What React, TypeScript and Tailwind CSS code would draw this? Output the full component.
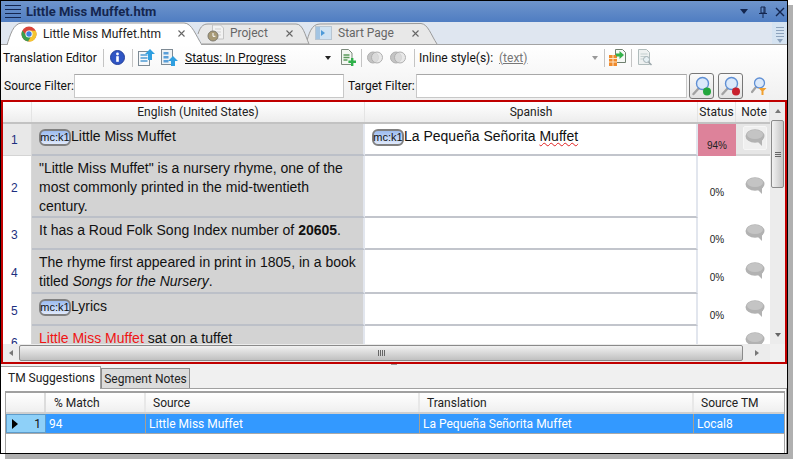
import React from 'react';

const uiFont = { fontFamily: 'Roboto, "Noto Sans", sans-serif' };

const ChromeIcon = () => (
  <svg width="16" height="16" viewBox="0 0 16 16">
    <circle cx="8" cy="8" r="7.5" fill="#d9453a" />
    <path d="M1.3 4.6 A7.5 7.5 0 0 0 7.2 15.5 L10.6 9.5 L5.4 9.5 Z" fill="#3a9f4d" />
    <path d="M8 4.5 L14.8 4.8 A7.5 7.5 0 0 1 7.2 15.5 L10.8 9 Z" fill="#f4c531" />
    <circle cx="8" cy="8" r="3.6" fill="#fff" />
    <circle cx="8" cy="8" r="2.7" fill="#3f7fe0" />
  </svg>
);

const ProjectIcon = () => (
  <svg width="18" height="18" viewBox="0 0 18 18">
    <path d="M5.5 1h8l3 3v11h-11z" fill="#f2f2f2" stroke="#c4c4c4" />
    <path d="M8 5h6M8 8h6M8 11h6" stroke="#cfcfcf" />
    <circle cx="6" cy="12" r="5" fill="#a89a76" stroke="#7e7a6e" />
    <path d="M6 9v3.3h2.4" stroke="#fff" fill="none" />
  </svg>
);

const StartIcon = () => (
  <svg width="17" height="14" viewBox="0 0 17 14">
    <rect x="0.5" y="0.5" width="16" height="13" fill="#cfe2f2" stroke="#b9c6d2" />
    <rect x="1" y="1" width="4" height="12" fill="#a3c4e2" />
    <path d="M6 4l4 3-4 3z" fill="#4d9ad8" />
  </svg>
);

const CloseX = () => (
  <svg width="7" height="7" viewBox="0 0 7 7" stroke="#666" strokeWidth="1.1">
    <path d="M0.5 0.5l6 6M6.5 0.5l-6 6" />
  </svg>
);

const InfoIcon = () => (
  <svg width="15" height="15" viewBox="0 0 15 15">
    <circle cx="7.5" cy="7.5" r="7" fill="#2f55c4" stroke="#24409a" />
    <circle cx="7.5" cy="4" r="1.4" fill="#fff" />
    <rect x="6.2" y="6.2" width="2.6" height="5.6" fill="#fff" />
  </svg>
);

const UploadDocIcon = () => (
  <svg width="17" height="17" viewBox="0 0 17 17">
    <rect x="0.5" y="2.5" width="11" height="14" fill="#f6f8fa" stroke="#7d8a94" />
    <path d="M2.5 6h7M2.5 9h7M2.5 12h7" stroke="#4f9bd4" strokeWidth="1.4" />
    <path d="M12 0l5 5h-3v6h-4V5H7z" fill="#2f9fe0" />
  </svg>
);

const UploadListIcon = () => (
  <svg width="17" height="17" viewBox="0 0 17 17">
    <rect x="0.5" y="0.5" width="11" height="15" fill="#eef2f4" stroke="#7d8a94" />
    <rect x="2.5" y="3" width="5" height="2.5" fill="#5a9fd8" />
    <rect x="2.5" y="7" width="5" height="2.5" fill="#5a9fd8" />
    <rect x="2.5" y="11" width="5" height="2.5" fill="#5a9fd8" />
    <path d="M12 7l5 5h-3v5h-4v-5H7z" fill="#2f9fe0" />
  </svg>
);

const AddDocIcon = () => (
  <svg width="16" height="17" viewBox="0 0 16 17">
    <path d="M1.5 0.5h7l3.5 3.5v11.5H1.5z" fill="#f4f7f2" stroke="#7c8a7c" />
    <path d="M3.5 6h6M3.5 8.5h6M3.5 11h4" stroke="#5a9a5a" strokeWidth="1.3" />
    <path d="M11 9h2.4v2.6H16V14h-2.6v3H11v-3H8.4v-2.4H11z" fill="#2fb14a" />
  </svg>
);

const CirclesIcon = () => (
  <svg width="16" height="13" viewBox="0 0 16 13">
    <circle cx="6" cy="6.5" r="5.5" fill="#c4c4c4" stroke="#b0b0b0" />
    <circle cx="10" cy="6.5" r="5.5" fill="#e2e2e2" fillOpacity="0.75" stroke="#b0b0b0" />
  </svg>
);

const ExportIcon = () => (
  <svg width="17" height="17" viewBox="0 0 17 17">
    <path d="M6.5 0.5h7l3 3v10h-10z" fill="#f5f8f5" stroke="#6f7f6f" />
    <rect x="0" y="6" width="8" height="11" fill="#ef8a2c" />
    <path d="M0 9.5h8M0 13h8M4 6v11" stroke="#fde3c4" />
    <path d="M7 4.5h3.5V2L15 6l-4.5 4V7.5H7z" fill="#35b24a" />
  </svg>
);

const PreviewIcon = () => (
  <svg width="15" height="17" viewBox="0 0 15 17">
    <path d="M0.5 0.5h8l3 3v12h-11z" fill="#eef1f1" stroke="#b0bcbc" />
    <path d="M2.5 5h7M2.5 7.5h7M2.5 10h5" stroke="#c3cfcf" />
    <circle cx="8.5" cy="10.5" r="3" fill="#e6f0f4" stroke="#a5b2b6" />
    <path d="M10.5 13l3 3" stroke="#9aa6aa" strokeWidth="1.5" />
  </svg>
);

const SearchDotIcon = ({ dot }: { dot: string }) => (
  <svg width="20" height="20" viewBox="0 0 20 20">
    <path d="M7 12l-5.5 6" stroke="#a2a2a2" strokeWidth="2.4" strokeLinecap="round" />
    <circle cx="10.5" cy="7.5" r="6" fill="#dbe9fa" stroke="#5f8fd4" strokeWidth="1.4" />
    <circle cx="15" cy="15.5" r="4" fill={dot} />
  </svg>
);

const SearchFilterIcon = () => (
  <svg width="17" height="18" viewBox="0 0 17 18">
    <path d="M5 10l-4 5" stroke="#a2a2a2" strokeWidth="2.2" strokeLinecap="round" />
    <circle cx="8.5" cy="6" r="5" fill="#dbe9fa" stroke="#5f8fd4" strokeWidth="1.3" />
    <path d="M7.5 11h8l-3 3v4h-2v-4z" fill="#f0a030" />
  </svg>
);

const NoteIcon = () => (
  <svg width="20" height="17" viewBox="0 0 20 17">
    <ellipse cx="10" cy="7" rx="9.5" ry="6.8" fill="#b2b2b2" />
    <ellipse cx="10" cy="5.5" rx="8" ry="4.5" fill="#c4c4c4" />
    <path d="M12 12l5 5v-7z" fill="#b2b2b2" />
  </svg>
);

const Caret = ({ cls }: { cls: string }) => (
  <span className={'w-0 h-0 border-x-[3.5px] border-x-transparent border-t-[4px] ' + cls} />
);

const Sep = () => <span className="block w-px h-[18px] bg-[#c4c4c4] shrink-0" />;

const McTag = () => (
  <span className="inline-flex items-center justify-center align-baseline w-[32px] h-[17px] rounded-[6px] border-2 border-[#808080] bg-gradient-to-b from-[#9dbcf0] to-[#dfe9fb] text-[11px] leading-none text-[#111]">
    mc:k1
  </span>
);

function TabShape({ d, fill }: { d: string; fill: string }) {
  return (
    <svg className="absolute inset-0" width="100%" height="100%">
      <path d={d} fill={fill} stroke="#9a9a9a" />
    </svg>
  );
}

function DocTabs() {
  return (
    <div className="relative h-[23px] bg-[#dfe6f0] border-b border-[#a3a3a3] flex shrink-0 whitespace-nowrap">
      <div className="relative w-[134px] h-[22px] ml-[303px] -mr-[437px] text-[#666] text-[12px]">
        <TabShape d="M2 22 C5 12 7 2 16 2 L117 1.5 C124 2 127 13 133 22" fill="#e8e8e8" />
        <div className="relative flex items-center h-full">
          <span className="ml-[11px]"><StartIcon /></span>
          <span className="ml-[6px] w-[74px]">Start Page</span>
          <CloseX />
        </div>
      </div>
      <div className="relative w-[114px] h-[22px] ml-[195px] -mr-[309px] text-[#666] text-[12px]">
        <TabShape d="M2 12 C4 6 6 2 12 2 L100 2 C107 2 109 13 113 22 L6 22" fill="#e8e8e8" />
        <div className="relative flex items-center h-full">
          <span className="ml-[11px]"><ProjectIcon /></span>
          <span className="ml-[5px] w-[56px]">Project</span>
          <CloseX />
        </div>
      </div>
      <div className="relative w-[197px] h-[23px] ml-[5px] text-[#222] text-[12px]">
        <TabShape d="M1 23 C4 14 7 1 16 1 L178 1 C186 1 190 14 196 23" fill="#ffffff" />
        <div className="relative flex items-center h-full">
          <span className="ml-[15px]"><ChromeIcon /></span>
          <span className="ml-[6px] w-[135px]">Little Miss Muffet.htm</span>
          <CloseX />
        </div>
      </div>
      <div className="ml-auto w-[15px] h-[22px] bg-[#d5e3f1] flex flex-col items-center gap-[2px] pt-[5px]">
        <span className="w-[8px] h-px bg-[#8da3bd]" />
        <span className="w-[8px] h-px bg-[#8da3bd]" />
        <span className="w-[8px] h-px bg-[#8da3bd]" />
        <span className="w-[8px] h-px bg-[#8da3bd]" />
        <Caret cls="border-t-[#8da3bd]" />
      </div>
    </div>
  );
}

function Toolbar() {
  return (
    <div className="h-[55px] shrink-0 bg-gradient-to-b from-white to-[#f0f0f0] text-[12px] text-[#111] whitespace-nowrap">
      <div className="h-[25px] flex items-center pl-[2px]">
        <span className="w-[100px]">Translation Editor</span>
        <Sep />
        <span className="ml-[6px]"><InfoIcon /></span>
        <span className="ml-[7px]"><Sep /></span>
        <span className="ml-[5px]"><UploadDocIcon /></span>
        <span className="ml-[6px]"><UploadListIcon /></span>
        <span className="ml-[7px] w-[140px] underline">Status: In Progress</span>
        <Caret cls="border-t-[#222]" />
        <span className="ml-[9px]"><AddDocIcon /></span>
        <span className="ml-[5px]"><Sep /></span>
        <span className="ml-[5px]"><CirclesIcon /></span>
        <span className="ml-[7px]"><CirclesIcon /></span>
        <span className="ml-[8px]"><Sep /></span>
        <span className="ml-[4px] w-[80px]">Inline style(s):</span>
        <span className="w-[93px] underline text-[#777]">(text)</span>
        <Caret cls="border-t-[#999]" />
        <span className="ml-[6px]"><Sep /></span>
        <span className="ml-[4px]"><ExportIcon /></span>
        <span className="ml-[5px]"><Sep /></span>
        <span className="ml-[6px]"><PreviewIcon /></span>
      </div>
      <div className="mt-[2px] h-[27px] flex items-center pl-[3px]">
        <span className="w-[70px]">Source Filter:</span>
        <span className="w-[270px] h-[24px] bg-white border border-[#c8c8c8] border-t-[#a8a8a8]" />
        <span className="ml-[4px] w-[68px]">Target Filter:</span>
        <span className="w-[271px] h-[24px] bg-white border border-[#c8c8c8] border-t-[#a8a8a8]" />
        <span className="ml-[2px] w-[25px] h-[26px] rounded-[3px] border border-[#777] bg-gradient-to-b from-[#fafafa] to-[#e2e2e2] flex items-center justify-center">
          <SearchDotIcon dot="#22a63c" />
        </span>
        <span className="ml-[4px] w-[25px] h-[26px] rounded-[3px] border border-[#777] bg-gradient-to-b from-[#fafafa] to-[#e2e2e2] flex items-center justify-center">
          <SearchDotIcon dot="#c8202c" />
        </span>
        <span className="ml-[8px]"><SearchFilterIcon /></span>
      </div>
    </div>
  );
}

function HeaderCell({ cls, children }: { cls: string; children?: React.ReactNode }) {
  return (
    <div className={'h-full flex items-center justify-center border-r border-[#e4e4e4] ' + cls}>{children}</div>
  );
}

interface SegmentRow {
  num: number;
  height: string;
  source: React.ReactNode;
  target?: React.ReactNode;
  status?: string;
}

const rows: SegmentRow[] = [
  {
    num: 1,
    height: 'h-[32px]',
    source: <><McTag />Little Miss Muffet</>,
    target: <><McTag />La Pequeña Señorita <span className="underline decoration-wavy decoration-[#e02020] decoration-1">Muffet</span></>,
    status: '94%',
  },
  {
    num: 2,
    height: 'h-[62px]',
    source: <>"Little Miss Muffet" is a nursery rhyme, one of the most commonly printed in the mid-twentieth century.</>,
    status: '0%',
  },
  {
    num: 3,
    height: 'h-[32px]',
    source: <>It has a Roud Folk Song Index number of <b>20605</b>.</>,
    status: '0%',
  },
  {
    num: 4,
    height: 'h-[44px]',
    source: <>The rhyme first appeared in print in 1805, in a book titled <i>Songs for the Nursery</i>.</>,
    status: '0%',
  },
  {
    num: 5,
    height: 'h-[32px]',
    source: <><McTag />Lyrics</>,
    status: '0%',
  },
  {
    num: 6,
    height: 'h-[32px]',
    source: <><span className="text-[#f01414]">Little Miss Muffet</span> sat on a tuffet</>,
  },
];

function SegmentGridRow({ row }: { row: SegmentRow }) {
  const first = row.num === 1;
  return (
    <div className={'flex shrink-0 ' + row.height}>
      <div className={'w-[29px] flex items-center pl-[8px] pt-[1px] text-[12px] text-[#1c2f80] border-r border-[#d8d8d8] ' + (first ? 'bg-[#e8e8e8] border-b border-b-[#d4d4d4]' : 'bg-white')}>
        {row.num}
      </div>
      <div className="w-[333px] bg-[#d3d3d3] pl-[7px] pr-[6px] pt-[3px] text-[14px] leading-[19px] text-[#111] border-r-2 border-r-[#e2e6ee] border-b-2 border-b-[#bcc0c8]">
        {row.source}
      </div>
      <div className="w-[333px] bg-white pl-[7px] pr-[6px] pt-[3px] text-[14px] leading-[19px] text-[#111] border-r-2 border-r-[#e2e6ee] border-b-2 border-b-[#c2c5cc]">
        {row.target}
      </div>
      <div className={'w-[38px] flex items-center justify-center pt-[11px] text-[10px] text-[#222] ' + (first ? 'bg-[#dd829a]' : 'bg-white')}>
        {row.status}
      </div>
      <div className={'w-[34px] flex items-center justify-center pb-[3px] pl-[3px] ' + (first ? 'bg-[#e6e6e6] border-b-2 border-b-[#d4d4d4]' : 'bg-white')}>
        {first ? (
          <span className="w-[24px] h-[24px] flex items-center justify-center bg-[#efefef] border border-[#f6f6f6] rounded-[2px]">
            <NoteIcon />
          </span>
        ) : (
          <NoteIcon />
        )}
      </div>
    </div>
  );
}

function VScroll() {
  return (
    <div className="w-[15px] bg-[#ececec] flex flex-col items-center shrink-0">
      <div className="h-[18px] flex items-center justify-center">
        <span className="w-0 h-0 border-x-[3px] border-x-transparent border-b-[4px] border-b-[#777]" />
      </div>
      <div className="w-[13px] h-[68px] rounded-[2px] border border-[#8a8a8a] bg-gradient-to-r from-[#f2f2f2] to-[#c4c4c4] flex flex-col items-center justify-center gap-px">
        <span className="w-[6px] h-px bg-[#666]" />
        <span className="w-[6px] h-px bg-[#666]" />
        <span className="w-[6px] h-px bg-[#666]" />
      </div>
      <div className="mt-auto h-[18px] flex items-center justify-center">
        <Caret cls="border-t-[#666]" />
      </div>
    </div>
  );
}

function HScroll() {
  return (
    <div className="h-[18px] flex items-center bg-[#ececec] shrink-0">
      <div className="w-[16px] flex justify-center">
        <span className="w-0 h-0 border-y-[3.5px] border-y-transparent border-r-[4px] border-r-[#777]" />
      </div>
      <div className="w-[724px] h-[16px] rounded-[2px] border border-[#8a8a8a] bg-gradient-to-b from-[#f2f2f2] to-[#c0c0c0] flex items-center justify-center gap-px">
        <span className="w-px h-[6px] bg-[#666]" />
        <span className="w-px h-[6px] bg-[#666]" />
        <span className="w-px h-[6px] bg-[#666]" />
        <span className="w-px h-[6px] bg-[#666]" />
      </div>
      <div className="w-[27px] flex justify-center">
        <span className="w-0 h-0 border-y-[3.5px] border-y-transparent border-l-[4px] border-l-[#777]" />
      </div>
      <div className="flex-1 h-full bg-[#f0f0f0]" />
    </div>
  );
}

function SegmentGrid() {
  return (
    <div className="h-[264px] shrink-0 border-2 border-[#c00000] flex flex-col bg-white">
      <div className="h-[242px] flex">
        <div className="w-[767px] flex flex-col">
          <div className="h-[22px] flex shrink-0 text-[12px] text-[#222] bg-gradient-to-b from-white to-[#ededed] border-b-2 border-[#c2c2c2]">
            <HeaderCell cls="w-[29px]" />
            <HeaderCell cls="w-[333px]">English (United States)</HeaderCell>
            <HeaderCell cls="w-[333px]">Spanish</HeaderCell>
            <HeaderCell cls="w-[38px]">Status</HeaderCell>
            <HeaderCell cls="w-[34px] pl-[3px] overflow-hidden">Note</HeaderCell>
          </div>
          <div className="flex-1 overflow-hidden flex flex-col" style={{ fontFamily: '"Liberation Sans", Arial, sans-serif' }}>
            {rows.map((row) => (
              <SegmentGridRow key={row.num} row={row} />
            ))}
          </div>
        </div>
        <VScroll />
      </div>
      <HScroll />
    </div>
  );
}

function BottomPanel() {
  return (
    <div className="flex-1 flex flex-col min-h-0 bg-[#f0f0f0] text-[12px] text-[#222] whitespace-nowrap">
      <div className="h-[1px] relative shrink-0">
        <span className="absolute left-[390px] top-0 w-[6px] h-px bg-[#999]" />
      </div>
      <div className="h-[24px] shrink-0 flex items-end border-b border-[#a0a0a0]">
        <div className="w-[100px] h-[23px] -mb-px bg-white border-r border-t border-[#a0a0a0] flex items-center pl-[7px]">TM Suggestions</div>
        <div className="w-[89px] h-[20px] pt-[1px] bg-[#dcdcdc] border border-b-0 border-[#8c8c8c] flex items-center justify-center">Segment Notes</div>
      </div>
      <div className="flex-1 bg-white pl-[4px] pr-[1px] pt-[2px] border-r border-[#a0a0a0]">
        <div className="h-full border border-b-0 border-[#a0a0a0] border-t-2">
          <div className="h-[21px] flex bg-gradient-to-b from-white to-[#efefef] border-b-2 border-[#cfcfcf]">
            <div className="w-[40px] border-r-2 border-[#dcdcdc]" />
            <div className="w-[100px] pl-[8px] flex items-center border-r-2 border-[#e8e8e8]">% Match</div>
            <div className="w-[274px] pl-[7px] flex items-center border-r-2 border-[#e8e8e8]">Source</div>
            <div className="w-[274px] pl-[7px] flex items-center border-r-2 border-[#e8e8e8]">Translation</div>
            <div className="flex-1 pl-[7px] flex items-center">Source TM</div>
          </div>
          <div className="h-[20px] flex bg-[#3399ff] text-white border-b border-[#a8a8a8]">
            <div className="w-[40px] bg-[#8ed0f8] border border-[#5c9ccc] flex items-center pl-[5px] pr-[4px] text-[#111]">
              <span className="w-0 h-0 border-y-[5px] border-y-transparent border-l-[6px] border-l-black" />
              <span className="ml-auto">1</span>
            </div>
            <div className="w-[100px] pl-[3px] flex items-center border-r border-[#a8a090]">94</div>
            <div className="w-[274px] pl-[3px] flex items-center border-r border-[#a8a090]">Little Miss Muffet</div>
            <div className="w-[274px] pl-[3px] flex items-center border-r border-[#a8a090]">La Pequeña Señorita Muffet</div>
            <div className="flex-1 pl-[3px] flex items-center">Local8</div>
          </div>
        </div>
      </div>
    </div>
  );
}

export default function App() {
  return (
    <div className="w-[793px] h-[459px] bg-white overflow-hidden" style={uiFont}>
      <div className="w-[788px] h-[454px] border border-black shadow-[5px_5px_0_#b0b0b0] flex flex-col bg-white">
        <div className="h-[21px] shrink-0 bg-gradient-to-b from-[#6f95cc] to-[#4f7dc2] flex items-center text-[#14264f]">
          <div className="ml-[4px] w-[16px] flex flex-col gap-[3px]">
            <span className="h-px bg-[#14264f]" />
            <span className="h-px bg-[#14264f]" />
            <span className="h-px bg-[#14264f]" />
            <span className="h-px bg-[#14264f]" />
          </div>
          <span className="ml-[5px] text-[13px] font-bold">Little Miss Muffet.htm</span>
          <div className="ml-auto flex items-center">
            <span className="w-0 h-0 border-x-[4px] border-x-transparent border-t-[5px] border-t-[#14264f]" />
            <svg className="ml-[10px]" width="10" height="12" viewBox="0 0 10 12" fill="none" stroke="#14264f">
              <path d="M3 1h4v6H3zM1 7.5h8M5 8v4M6 1v6" />
            </svg>
            <svg className="ml-[7px] mr-[2px]" width="10" height="10" viewBox="0 0 10 10" stroke="#14264f" strokeWidth="1.4">
              <path d="M1 1l8 8M9 1l-8 8" />
            </svg>
          </div>
        </div>
        <DocTabs />
        <Toolbar />
        <SegmentGrid />
        <BottomPanel />
      </div>
    </div>
  );
}
